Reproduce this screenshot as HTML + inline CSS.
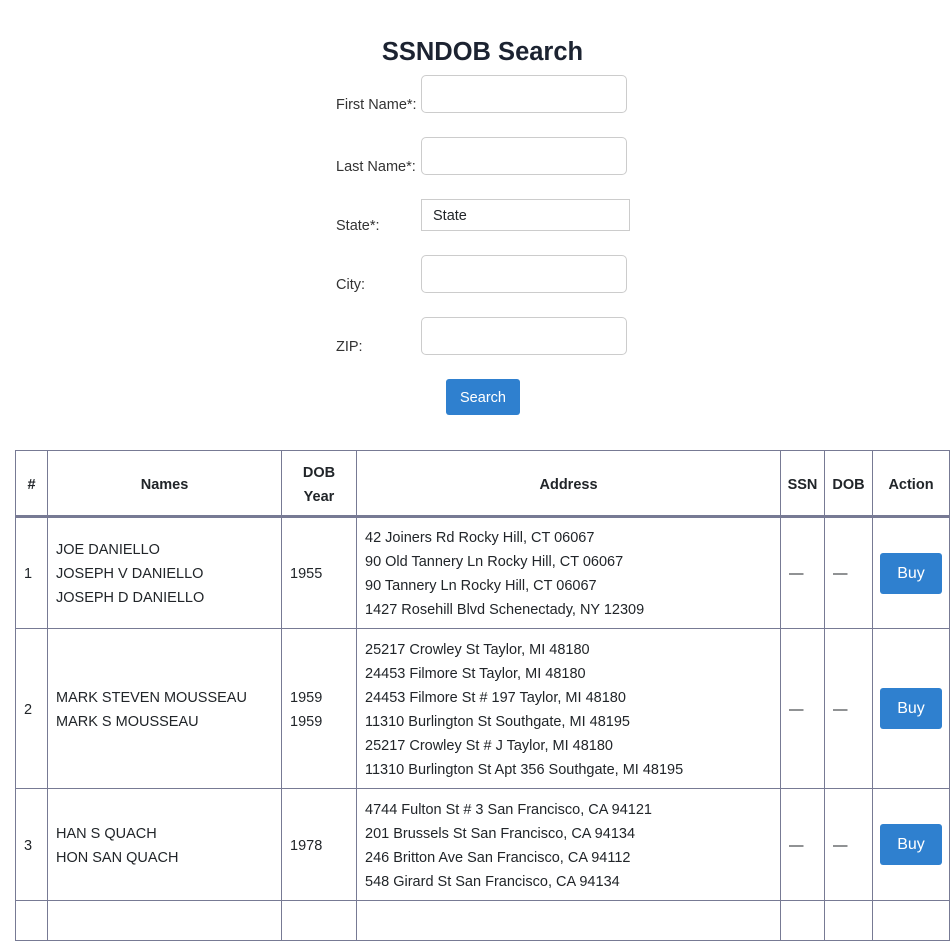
<!DOCTYPE html>
<html><head><meta charset="utf-8"><style>
body{margin:0;background:#fff;font-family:"Liberation Sans",sans-serif;color:#212529;font-size:14.5px;width:951px;height:903px;overflow:hidden;position:relative}
h1{position:absolute;top:38px;left:0;width:965px;text-align:center;margin:0;font-size:25.5px;font-weight:bold;color:#1c2331}
.lbl{position:absolute;left:336px;font-size:14.5px;color:#333}
.inp{position:absolute;left:421px;width:206px;height:38px;border:1px solid #ccc;border-radius:5px;box-sizing:border-box}
.sel{position:absolute;left:421px;top:199px;width:209px;height:32px;border:1px solid #ccc;box-sizing:border-box;padding:8px 0 0 11px;font-size:14.5px}
.btn{position:absolute;background:#2f80cf;color:#fff;border-radius:3px;text-align:center}
table{position:absolute;left:15px;top:450px;border-collapse:collapse;table-layout:fixed;width:934px}
td,th{border:1px solid #777a94;padding:0 8px;vertical-align:middle;line-height:24px;font-size:14.5px}
td{padding-top:2px}
th{font-weight:bold;text-align:center;height:61px;padding-top:3px}
thead tr{border-bottom:3px solid #777a94}
.b{background:#2f80cf;color:#fff;border-radius:3px;height:41px;line-height:41px;text-align:center;font-size:16px}
</style></head><body>
<h1>SSNDOB Search</h1>
<div class="lbl" style="top:97px">First Name*:</div><div class="inp" style="top:75px"></div>
<div class="lbl" style="top:159px">Last Name*:</div><div class="inp" style="top:137px"></div>
<div class="lbl" style="top:218px">State*:</div><div class="sel">State</div>
<div class="lbl" style="top:277px">City:</div><div class="inp" style="top:255px"></div>
<div class="lbl" style="top:339px">ZIP:</div><div class="inp" style="top:317px"></div>
<div class="btn" style="left:446px;top:379px;width:74px;height:36px;line-height:38px">Search</div>
<table>
<colgroup><col style="width:32px"><col style="width:234px"><col style="width:75px"><col style="width:424px"><col style="width:44px"><col style="width:48px"><col style="width:77px"></colgroup>
<thead><tr><th style="padding:3px 0 0">#</th><th>Names</th><th>DOB<br>Year</th><th>Address</th><th style="padding:3px 0 0">SSN</th><th style="padding:3px 0 0">DOB</th><th>Action</th></tr></thead>
<tbody>
<tr style="height:112px"><td>1</td><td>JOE DANIELLO<br>JOSEPH V DANIELLO<br>JOSEPH D DANIELLO</td><td>1955</td><td>42 Joiners Rd Rocky Hill, CT 06067<br>90 Old Tannery Ln Rocky Hill, CT 06067<br>90 Tannery Ln Rocky Hill, CT 06067<br>1427 Rosehill Blvd Schenectady, NY 12309</td><td>—</td><td>—</td><td style="padding:0 7px 0 7px"><div class="b">Buy</div></td></tr>
<tr style="height:160px"><td>2</td><td>MARK STEVEN MOUSSEAU<br>MARK S MOUSSEAU</td><td>1959<br>1959</td><td>25217 Crowley St Taylor, MI 48180<br>24453 Filmore St Taylor, MI 48180<br>24453 Filmore St # 197 Taylor, MI 48180<br>11310 Burlington St Southgate, MI 48195<br>25217 Crowley St # J Taylor, MI 48180<br>11310 Burlington St Apt 356 Southgate, MI 48195</td><td>—</td><td>—</td><td style="padding:0 7px 0 7px"><div class="b">Buy</div></td></tr>
<tr style="height:112px"><td>3</td><td>HAN S QUACH<br>HON SAN QUACH</td><td>1978</td><td>4744 Fulton St # 3 San Francisco, CA 94121<br>201 Brussels St San Francisco, CA 94134<br>246 Britton Ave San Francisco, CA 94112<br>548 Girard St San Francisco, CA 94134</td><td>—</td><td>—</td><td style="padding:0 7px 0 7px"><div class="b">Buy</div></td></tr>
<tr style="height:40px"><td></td><td></td><td></td><td></td><td></td><td></td><td></td></tr>
</tbody></table>
</body></html>
